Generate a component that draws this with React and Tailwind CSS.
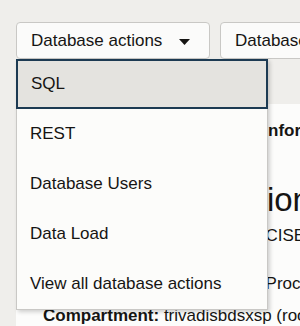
import { useState } from 'react';

const items = ['SQL', 'REST', 'Database Users', 'Data Load', 'View all database actions'];

function Caret() {
  return (
    <svg width="11" height="6" viewBox="0 0 11 6" className="mt-[2px]">
      <path d="M0 0 L11 0 L5.5 6 Z" fill="#161513" />
    </svg>
  );
}

export default function App() {
  const [active] = useState(0);

  return (
    <div
      className="relative w-[300px] h-[326px] overflow-hidden bg-[#efeeeb] text-[#161513]"
      style={{ fontFamily: '"Liberation Sans", Arial, sans-serif' }}
    >
      <div className="flex gap-[10px] pl-4 pt-[22px] whitespace-nowrap">
        <button className="flex items-center justify-between h-[37px] w-[194px] shrink-0 pl-[14px] pr-[19px] rounded-[4px] border border-[#c9c8c5] bg-[#fbfbfa] text-[17px]">
          Database actions
          <Caret />
        </button>
        <button className="flex items-center h-[37px] w-[200px] shrink-0 px-[14px] rounded-[4px] border border-[#c9c8c5] bg-[#fbfbfa] text-[17px]">
          Database tools
        </button>
      </div>

      {/* page content behind the open menu */}
      <div className="ml-4 mt-[45px] h-[240px] w-[320px] bg-[#fcfcfb] whitespace-nowrap">
        <div className="pl-[167px] pt-[17px] text-[17px] leading-[20px] font-bold">Database information</div>
        <div className="pl-[128px] mt-[41px] text-[33px] leading-[36px]">Connection details</div>
        <div className="pl-[161px] mt-[8px] text-[17px] leading-[20px]">Name: TVDCISEDB</div>
        <div className="pl-[76px] mt-[28px] text-[17px] leading-[20px]">Workload: Transaction Processing</div>
        <div className="pl-[27px] mt-[12px] text-[17px] leading-[20px]">
          <span className="font-bold">Compartment:</span> trivadisbdsxsp (root)
        </div>
      </div>

      <div className="absolute left-4 top-[59px] w-[252px] bg-[#fcfcfa] border border-[#c9c8c5] shadow-[2px_2px_4px_rgba(0,0,0,0.18)]">
        {items.map((label, i) => (
          <div
            key={label}
            className={
              i === active
                ? 'flex items-center h-[50px] -mx-px -mt-px px-[13px] bg-[#e4e3df] border-2 border-[#1c3a52] text-[17px]'
                : 'flex items-center h-[50px] px-[13px] text-[17px]'
            }
          >
            {label}
          </div>
        ))}
      </div>
    </div>
  );
}
